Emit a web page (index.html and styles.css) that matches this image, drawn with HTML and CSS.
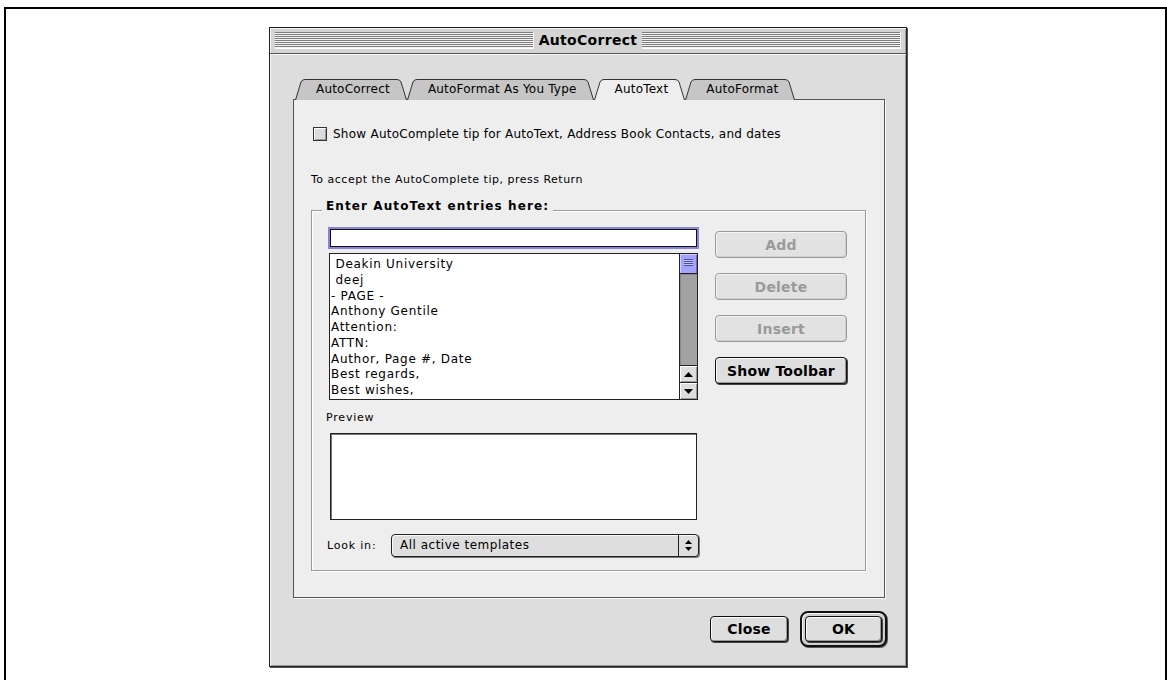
FILE: index.html
```html
<!DOCTYPE html>
<html lang="en">
<head>
<meta charset="utf-8">
<title>AutoCorrect</title>
<link rel="stylesheet" href="styles.css">
</head>
<body>
<div class="screen">
  <div class="window">
    <div class="titlebar">
      <div class="stripes"></div>
      <div class="title">AutoCorrect</div>
      <div class="stripes"></div>
    </div>

    <div class="window-body">
      <div class="tabs">
        <div class="tab">
          <svg class="tab-edge" width="10" height="21" viewBox="0 0 10 21"><path class="tab-fill" d="M0,21 L6,3 Q7,0.5 10,0.5 L10,21 Z"/><path class="tab-line" d="M0.5,21 L6,3 Q7,0.5 10,0.5"/></svg>
          <span class="tab-label">AutoCorrect</span>
          <svg class="tab-edge" width="10" height="21" viewBox="0 0 10 21"><path class="tab-fill" d="M10,21 L4,3 Q3,0.5 0,0.5 L0,21 Z"/><path class="tab-line" d="M9.5,21 L4,3 Q3,0.5 0,0.5"/></svg>
        </div>
        <div class="tab">
          <svg class="tab-edge" width="10" height="21" viewBox="0 0 10 21"><path class="tab-fill" d="M0,21 L6,3 Q7,0.5 10,0.5 L10,21 Z"/><path class="tab-line" d="M0.5,21 L6,3 Q7,0.5 10,0.5"/></svg>
          <span class="tab-label">AutoFormat As You Type</span>
          <svg class="tab-edge" width="10" height="21" viewBox="0 0 10 21"><path class="tab-fill" d="M10,21 L4,3 Q3,0.5 0,0.5 L0,21 Z"/><path class="tab-line" d="M9.5,21 L4,3 Q3,0.5 0,0.5"/></svg>
        </div>
        <div class="tab tab-active">
          <svg class="tab-edge" width="10" height="21" viewBox="0 0 10 21"><path class="tab-fill" d="M0,21 L6,3 Q7,0.5 10,0.5 L10,21 Z"/><path class="tab-line" d="M0.5,21 L6,3 Q7,0.5 10,0.5"/></svg>
          <span class="tab-label">AutoText</span>
          <svg class="tab-edge" width="10" height="21" viewBox="0 0 10 21"><path class="tab-fill" d="M10,21 L4,3 Q3,0.5 0,0.5 L0,21 Z"/><path class="tab-line" d="M9.5,21 L4,3 Q3,0.5 0,0.5"/></svg>
        </div>
        <div class="tab">
          <svg class="tab-edge" width="10" height="21" viewBox="0 0 10 21"><path class="tab-fill" d="M0,21 L6,3 Q7,0.5 10,0.5 L10,21 Z"/><path class="tab-line" d="M0.5,21 L6,3 Q7,0.5 10,0.5"/></svg>
          <span class="tab-label">AutoFormat</span>
          <svg class="tab-edge" width="10" height="21" viewBox="0 0 10 21"><path class="tab-fill" d="M10,21 L4,3 Q3,0.5 0,0.5 L0,21 Z"/><path class="tab-line" d="M9.5,21 L4,3 Q3,0.5 0,0.5"/></svg>
        </div>
      </div>

      <div class="panel">
        <div class="check-row">
          <span class="checkbox"></span>
          <span class="check-label">Show AutoComplete tip for AutoText, Address Book Contacts, and dates</span>
        </div>
        <p class="hint">To accept the AutoComplete tip, press Return</p>

        <div class="group">
          <div class="group-title">Enter AutoText entries here:</div>
          <div class="group-grid">
            <div class="entries">
              <div class="text-field"></div>
              <div class="list">
                <ul class="list-items">
                  <li> Deakin University</li>
                  <li> deej</li>
                  <li>- PAGE -</li>
                  <li>Anthony Gentile</li>
                  <li>Attention:</li>
                  <li>ATTN:</li>
                  <li>Author, Page #, Date</li>
                  <li>Best regards,</li>
                  <li>Best wishes,</li>
                </ul>
                <div class="scrollbar">
                  <div class="thumb"></div>
                  <div class="track"></div>
                  <div class="arrow"><svg width="9" height="5" viewBox="0 0 9 5"><path d="M0,5 L4.5,0 L9,5 Z"/></svg></div>
                  <div class="arrow"><svg width="9" height="5" viewBox="0 0 9 5"><path d="M0,0 L4.5,5 L9,0 Z"/></svg></div>
                </div>
              </div>
            </div>
            <div class="side-buttons">
              <button class="btn btn-side" disabled>Add</button>
              <button class="btn btn-side" disabled>Delete</button>
              <button class="btn btn-side" disabled>Insert</button>
              <button class="btn btn-side">Show Toolbar</button>
            </div>
          </div>

          <div class="field-label">Preview</div>
          <div class="preview"></div>

          <div class="look-row">
            <span class="look-label">Look in:</span>
            <div class="popup">
              <span class="popup-text">All active templates</span>
              <span class="popup-arrows"><svg width="7" height="11" viewBox="0 0 7 11"><path d="M0,4 L3.5,0 L7,4 Z M0,7 L3.5,11 L7,7 Z"/></svg></span>
            </div>
          </div>
        </div>
      </div>

      <div class="dialog-buttons">
        <button class="btn btn-close">Close</button>
        <div class="default-ring"><button class="btn btn-ok">OK</button></div>
      </div>
    </div>
  </div>
</div>
</body>
</html>
```

FILE: styles.css
```css
html, body {
  margin: 0;
  padding: 0;
  background: #fff;
  overflow: hidden;
}

body {
  font-family: "DejaVu Sans", Verdana, sans-serif;
  color: #000;
}

/* framed page area */
.screen {
  box-sizing: border-box;
  margin: 7px 0 0 4px;
  width: 1163px;
  height: 673px;
  border: 2px solid #000;
  border-bottom: none;
  padding: 18px 0 0 263px;
}

/* dialog window */
.window {
  box-sizing: border-box;
  width: 638px;
  height: 640px;
  background: #dddddd;
  border: 1px solid #222;
  box-shadow: 1px 1px 0 #555;
  display: flex;
  flex-direction: column;
}

.titlebar {
  box-sizing: border-box;
  height: 26px;
  flex: none;
  display: flex;
  align-items: center;
  gap: 5px;
  padding: 0 5px;
  background: #d4d4d4;
  border-bottom: 1px solid #555;
  box-shadow: inset 1px 1px 0 #f4f4f4, inset -1px 0 0 #999;
}

.stripes {
  flex: 1;
  height: 17px;
  background: repeating-linear-gradient(#7e7e7e 0 1px, #f2f2f2 1px 2px);
  box-shadow: inset -1px -1px 0 #fff;
}

.title {
  font-weight: bold;
  font-size: 14px;
  letter-spacing: 0.3px;
  line-height: 17px;
}

.window-body {
  flex: 1;
  padding: 25px 21px 0 23px;
  box-shadow: inset 1px 1px 0 #f6f6f6, inset -1px -1px 0 #999;
}

/* tab strip */
.tabs {
  display: flex;
  height: 21px;
  margin: 0 0 -1px 2px;
}

.tab {
  display: flex;
  height: 21px;
  --tab-bg: #c6c6c6;
}

.tab-active {
  position: relative;
  z-index: 1;
  --tab-bg: #eeeeee;
}

.tab-edge {
  display: block;
  flex: none;
}

.tab-fill {
  fill: var(--tab-bg);
}

.tab-line {
  fill: none;
  stroke: #333;
  stroke-width: 1;
}

.tab-label {
  box-sizing: border-box;
  height: 21px;
  padding: 0 7px 0 11px;
  background: var(--tab-bg);
  border-top: 1px solid #333;
  font-size: 12px;
  line-height: 19px;
  letter-spacing: 0.2px;
  white-space: nowrap;
}

/* tab panel */
.panel {
  box-sizing: border-box;
  height: 499px;
  background: #eeeeee;
  border: 1px solid #555;
  box-shadow: 1px 1px 0 #fafafa;
  padding: 0 0 0 17px;
}

.check-row {
  display: flex;
  align-items: center;
  gap: 6px;
  height: 14px;
  margin: 27px 0 0 2px;
}

.checkbox {
  box-sizing: border-box;
  width: 14px;
  height: 14px;
  border: 1px solid #333;
  background: #dcdcdc;
  box-shadow: inset 1px 1px 0 #fff, inset -1px -1px 0 #999;
}

.check-label {
  font-size: 12px;
  line-height: 14px;
  letter-spacing: 0.25px;
  white-space: nowrap;
}

.hint {
  margin: 32px 0 0 0;
  font-size: 11px;
  line-height: 14px;
  letter-spacing: 0.5px;
}

/* group box */
.group {
  box-sizing: border-box;
  width: 555px;
  margin-top: 23px;
  border: 1px solid #9a9a9a;
  box-shadow: 1px 1px 0 #fff, inset 1px 1px 0 #fff;
  padding: 0 17px 13px;
}

.group-title {
  width: max-content;
  margin: -12px 0 0 -7px;
  padding: 0 4px;
  background: #eeeeee;
  font-weight: bold;
  font-size: 12px;
  line-height: 14px;
  letter-spacing: 1.1px;
}

.group-grid {
  display: grid;
  grid-template-columns: 369px 132px;
  column-gap: 17px;
}

.text-field {
  box-sizing: border-box;
  width: 367px;
  height: 18px;
  margin: 16px 0 0 1px;
  background: #fff;
  border: 1px solid #111;
  box-shadow: 0 0 0 2px #8585dd;
}

.list {
  box-sizing: border-box;
  display: flex;
  width: 369px;
  height: 147px;
  margin-top: 6px;
  background: #fff;
  border: 1px solid #222;
}

.list-items {
  flex: 1;
  margin: 0;
  padding: 3px 0 0 1px;
  list-style: none;
  font-size: 12px;
  line-height: 15.75px;
  letter-spacing: 0.7px;
  overflow: hidden;
}

.list-items li {
  white-space: pre;
}

.scrollbar {
  width: 17px;
  flex: none;
  display: flex;
  flex-direction: column;
  border-left: 1px solid #222;
}

.thumb {
  box-sizing: border-box;
  height: 20px;
  background: #a4a4ff;
  border-bottom: 1px solid #222;
  padding-top: 5px;
  box-shadow: inset 1px 1px 0 #d0d0ff, inset -1px 0 0 #6a6acc;
}

.thumb::before {
  content: "";
  display: block;
  width: 9px;
  height: 7px;
  margin: 0 auto;
  background: repeating-linear-gradient(#4a4aa8 0 1px, #c8c8ff 1px 2px);
}

.track {
  flex: 1;
  background: #a2a2a2;
  box-shadow: inset 1px 1px 0 #888;
}

.arrow {
  box-sizing: border-box;
  height: 17px;
  display: flex;
  align-items: center;
  justify-content: center;
  background: #dddddd;
  border-top: 1px solid #222;
  box-shadow: inset 1px 1px 0 #fff, inset -1px -1px 0 #999;
}

.arrow svg {
  display: block;
  fill: #000;
}

.side-buttons {
  display: flex;
  flex-direction: column;
  gap: 15px;
  margin-top: 18px;
}

/* push buttons */
.btn {
  box-sizing: border-box;
  padding: 0;
  margin: 0;
  font-family: "DejaVu Sans", Verdana, sans-serif;
  font-weight: bold;
  font-size: 14px;
  letter-spacing: 0.2px;
  color: #000;
  background: #dedede;
  border: 1px solid #111;
  border-radius: 4px;
  box-shadow: inset 1px 1px 0 #fafafa, inset -1px -1px 0 #999, 1px 1px 0 #444;
}

.btn:disabled {
  color: #9a9a9a;
  background: #e2e2e2;
  border-color: #9a9a9a;
  box-shadow: inset 1px 1px 0 #f2f2f2, inset -1px -1px 0 #cfcfcf;
}

.btn-side {
  width: 132px;
  height: 27px;
}

.field-label {
  margin: 11px 0 0 -3px;
  font-size: 11px;
  line-height: 14px;
  letter-spacing: 0.8px;
}

.preview {
  box-sizing: border-box;
  width: 367px;
  height: 87px;
  margin: 8px 0 0 1px;
  background: #fff;
  border: 1px solid #222;
  box-shadow: inset 1px 1px 0 #777;
}

.look-row {
  display: flex;
  align-items: center;
  justify-content: space-between;
  width: 370px;
  height: 23px;
  margin-top: 14px;
}

.look-label {
  margin-left: -2px;
  font-size: 11px;
  letter-spacing: 0.8px;
}

.popup {
  box-sizing: border-box;
  display: flex;
  width: 308px;
  height: 23px;
  background: #dedede;
  border: 1px solid #222;
  border-radius: 4px;
  box-shadow: inset 1px 1px 0 #fafafa, 1px 1px 0 #777;
}

.popup-text {
  flex: 1;
  padding-left: 8px;
  font-size: 12px;
  line-height: 21px;
  letter-spacing: 0.5px;
}

.popup-arrows {
  width: 19px;
  display: flex;
  align-items: center;
  justify-content: center;
  border-left: 1px solid #222;
}

.popup-arrows svg {
  display: block;
  fill: #000;
}

/* dialog buttons */
.dialog-buttons {
  display: flex;
  justify-content: flex-end;
  align-items: center;
  gap: 12px;
  margin: 13px -2px 0 0;
}

.btn-close {
  width: 78px;
  height: 26px;
}

.default-ring {
  box-sizing: border-box;
  width: 87px;
  height: 36px;
  padding: 3px;
  border: 2px solid #111;
  border-radius: 8px;
  background: #cfcfcf;
  box-shadow: inset 1px 1px 0 #f4f4f4, 1px 1px 0 #555;
}

.btn-ok {
  display: block;
  width: 77px;
  height: 26px;
}
```
